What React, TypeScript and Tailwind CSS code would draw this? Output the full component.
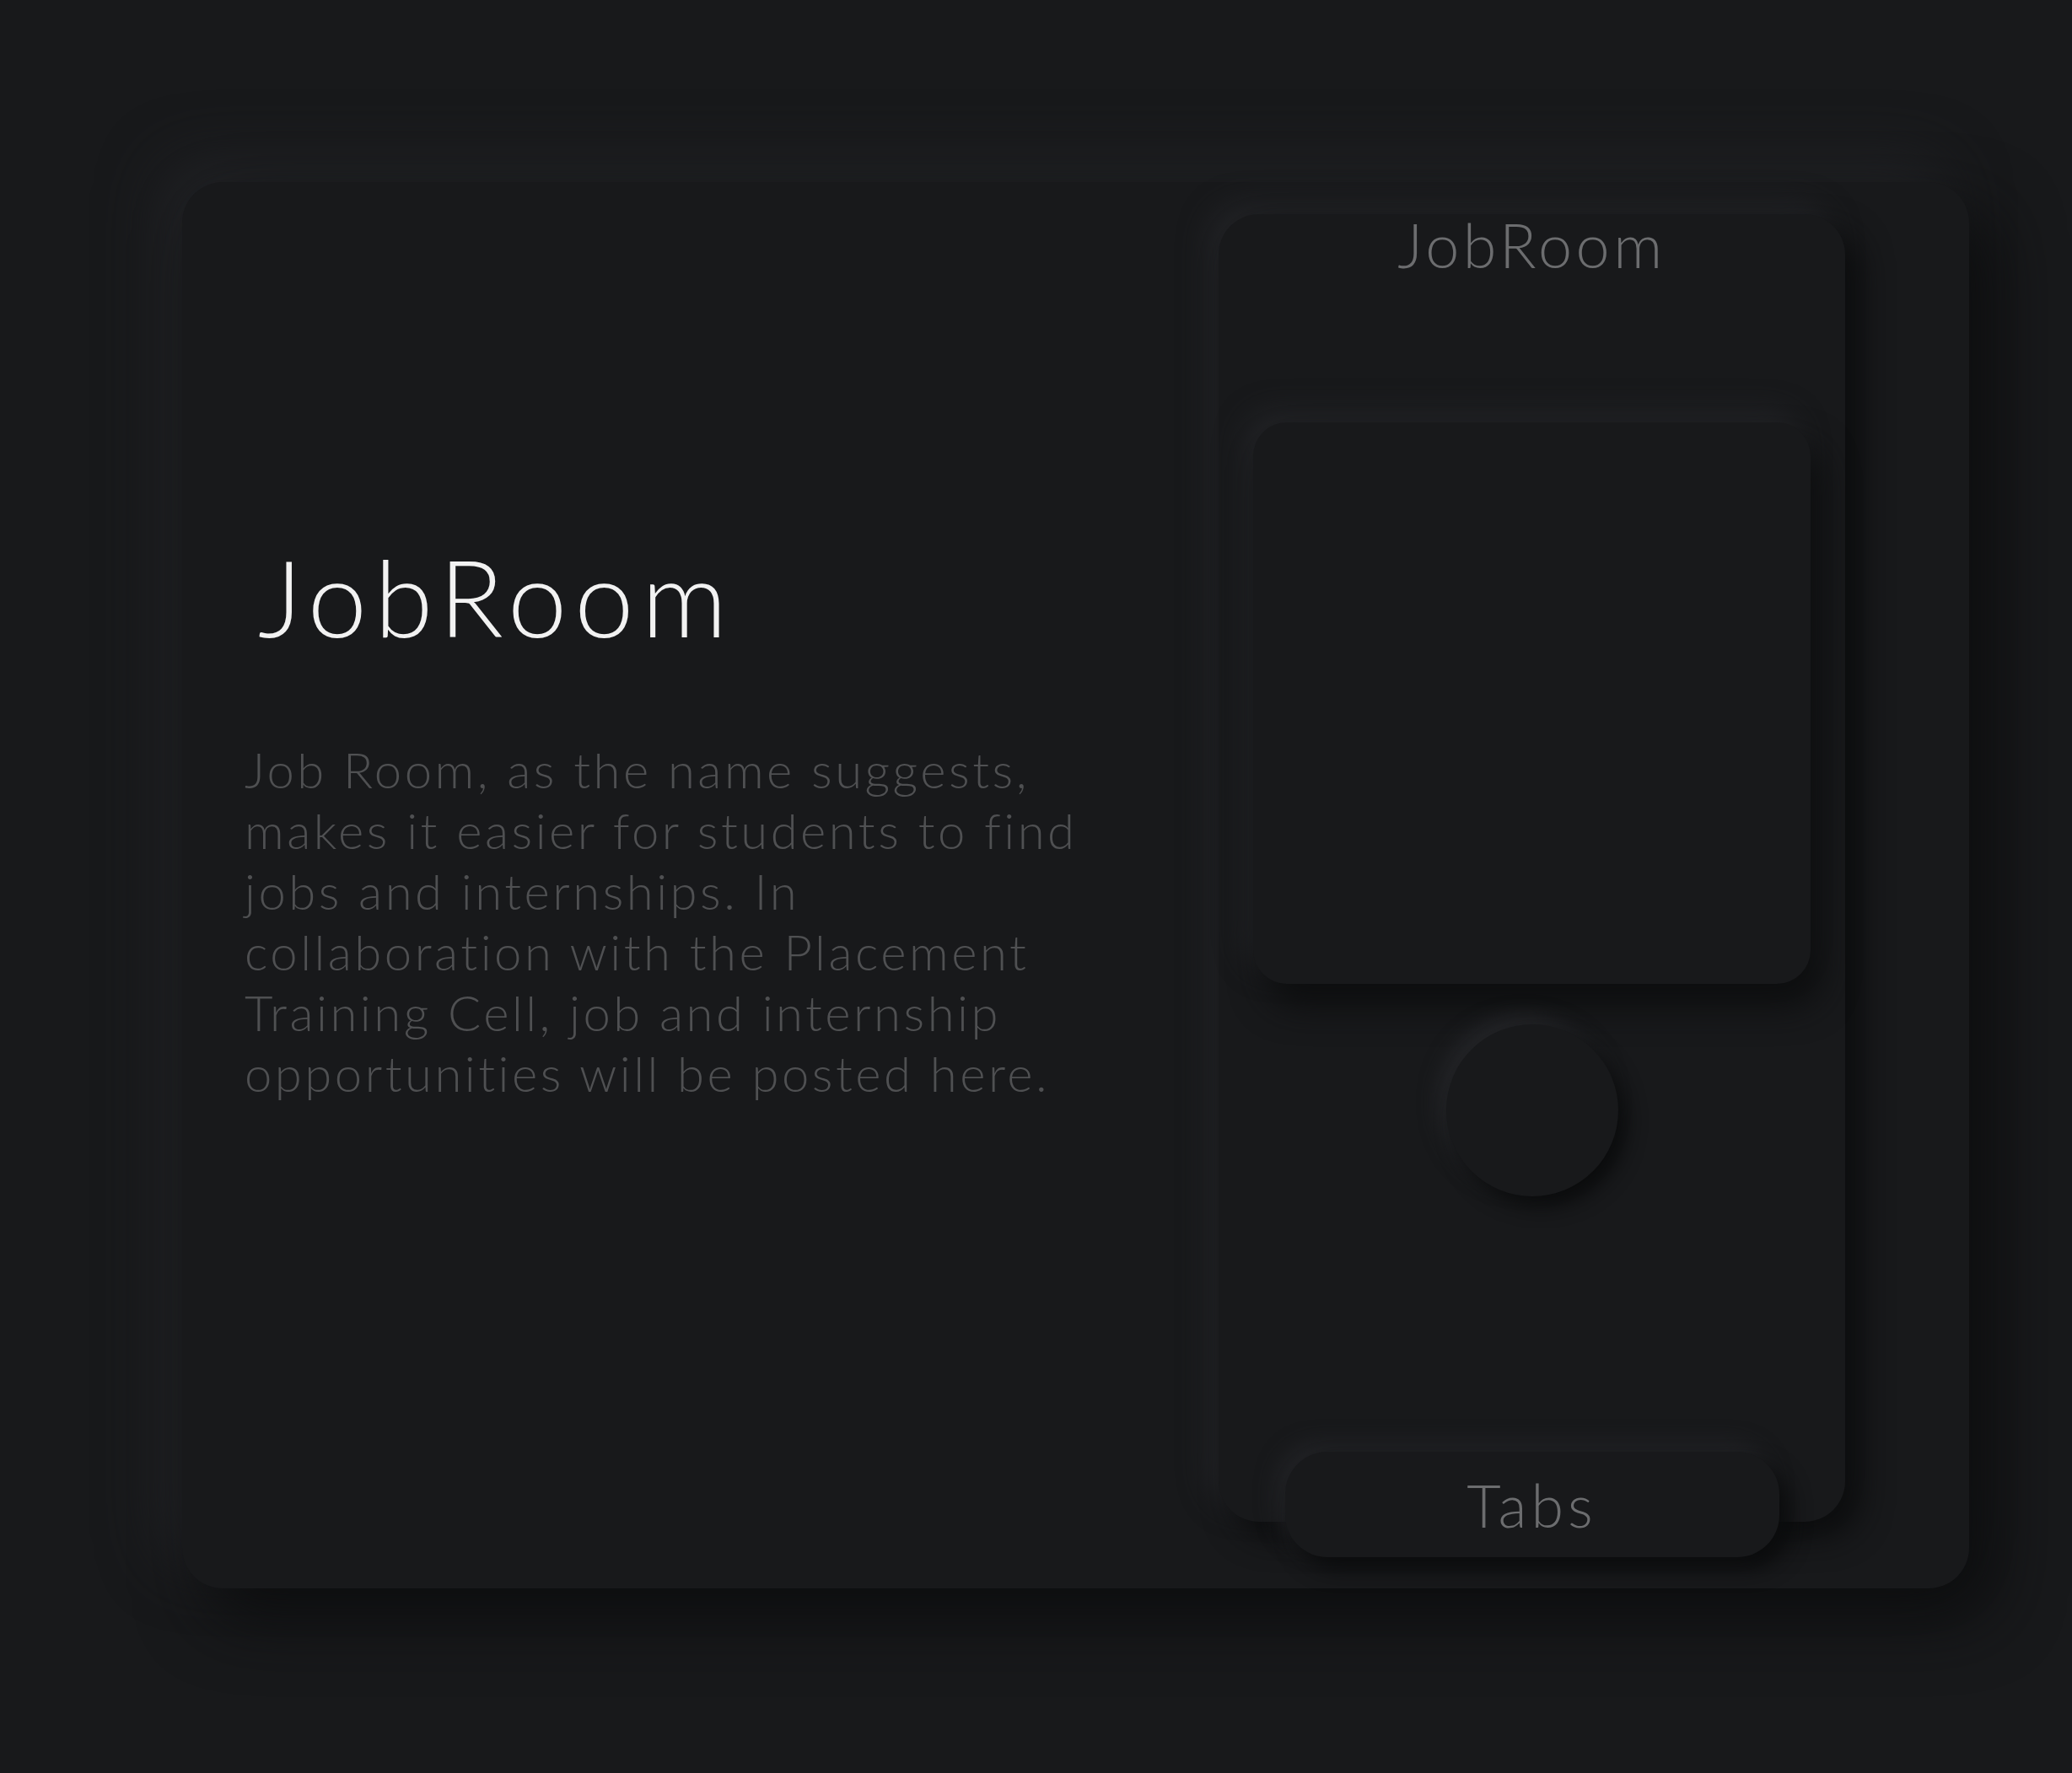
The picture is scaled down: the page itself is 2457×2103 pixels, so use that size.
const lines = [
  "Job Room, as the name suggests,",
  "makes it easier for students to find",
  "jobs and internships. In",
  "collaboration with the Placement",
  "Training Cell, job and internship",
  "opportunities will be posted here.",
];

function PhoneMock() {
  return (
    <div className="mt-[38px] mr-[147px] flex h-[1551px] w-[743px] shrink-0 flex-col items-center rounded-[48px] bg-[#18191b] shadow-[18px_18px_36px_#0c0d0e,-14px_-14px_32px_#222326]">
      <h2 className="text-[72px] leading-none font-light tracking-[4.5px] text-[#6c6d6f]">
        JobRoom
      </h2>

      {/* screen */}
      <div className="mt-[175px] h-[666px] w-[661px] rounded-[40px] bg-[#18191b] shadow-[14px_26px_40px_#0d0e0f,-12px_-14px_32px_#222326]" />

      {/* home button */}
      <div className="mt-[48px] h-[204px] w-[204px] rounded-full bg-[#18191b] shadow-[10px_12px_22px_#0b0c0d,-10px_-10px_22px_#242528]" />

      {/* tabs */}
      <div className="mt-auto mb-[-42px] flex h-[125px] w-[586px] items-center justify-center rounded-[50px] bg-[#18191b] shadow-[12px_14px_24px_#0b0c0d,-10px_-10px_24px_#222326]">
        <span className="text-[70px] leading-none font-light tracking-[5px] text-[#6c6d6f]">
          Tabs
        </span>
      </div>
    </div>
  );
}

export default function App() {
  return (
    <div className="min-h-screen w-full bg-[#18191b] pt-[216px] pl-[216px] pb-[219px] font-['Lato',sans-serif]">
      <div className="flex h-[1668px] w-[2119px] rounded-[48px] bg-[#18191b] shadow-[28px_34px_80px_#0c0d0e,-26px_-26px_70px_#222326]">
        <div className="flex-1 pt-[429px] pl-[74px]">
          <h1 className="ml-[16px] text-[126px] leading-none font-light tracking-[9px] text-[#f2f2f2]">
            JobRoom
          </h1>
          <p className="mt-[106px] text-[58px] leading-[72px] font-light tracking-[3.5px] text-[#4f5052]">
            {lines.map((l) => (
              <span key={l} className="block whitespace-nowrap">
                {l}
              </span>
            ))}
          </p>
        </div>
        <PhoneMock />
      </div>
    </div>
  );
}
